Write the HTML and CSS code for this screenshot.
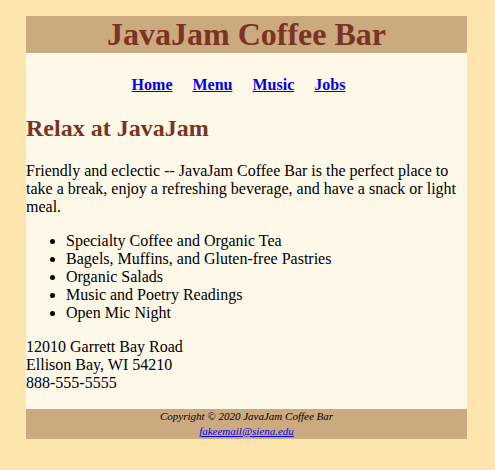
FILE: index.html
```html
<!DOCTYPE html>
<html lang="en">
<head>
<meta charset="utf-8">
<title>JavaJam Coffee Bar</title>
<link rel="stylesheet" href="styles.css">
</head>
<body>
<div class="wrapper">
  <header class="site-header">
    <h1>JavaJam Coffee Bar</h1>
  </header>
  <nav class="site-nav">
    <a href="#">Home</a>
    <a href="#">Menu</a>
    <a href="#">Music</a>
    <a href="#">Jobs</a>
  </nav>
  <main class="content">
    <h2>Relax at JavaJam</h2>
    <p>Friendly and eclectic -- JavaJam Coffee Bar is the perfect place to take a break, enjoy a refreshing beverage, and have a snack or light meal.</p>
    <ul>
      <li>Specialty Coffee and Organic Tea</li>
      <li>Bagels, Muffins, and Gluten-free Pastries</li>
      <li>Organic Salads</li>
      <li>Music and Poetry Readings</li>
      <li>Open Mic Night</li>
    </ul>
    <p class="address">12010 Garrett Bay Road<br>Ellison Bay, WI 54210<br>888-555-5555</p>
  </main>
  <footer class="site-footer">
    Copyright &copy; 2020 JavaJam Coffee Bar<br>
    <a href="#">fakeemail@siena.edu</a>
  </footer>
</div>
</body>
</html>
```

FILE: styles.css
```css
html, body {
  margin: 0;
  padding: 0;
}
body {
  background-color: #fce6ad;
  font-family: "Liberation Serif", "Times New Roman", serif;
  font-size: 16px;
  line-height: 18px;
  color: #000;
  padding: 16px 0 0;
}
.wrapper {
  width: 441px;
  margin: 0 0 0 26px;
  background-color: #fef8e9;
}
.site-header {
  background-color: #ccaa80;
}
.site-header h1 {
  margin: 0;
  color: #7b3423;
  font-size: 32px;
  line-height: 37px;
  text-align: center;
  font-weight: bold;
}
.site-nav {
  text-align: center;
  font-weight: bold;
  padding: 23px 0 0;
}
.site-nav a {
  color: #0000ee;
  margin-right: 16px;
}
.content h2 {
  color: #7b3423;
  font-size: 24px;
  line-height: 28px;
  margin: 20px 0;
}
.content p,
.content ul {
  margin: 0 0 16px;
}
.content ul {
  padding-left: 40px;
}
.content .address {
  margin-bottom: 17px;
}
.site-footer {
  background-color: #ccaa80;
  font-size: 11px;
  line-height: 15px;
  font-style: italic;
  text-align: center;
  padding: 0;
  height: 30px;
}
.site-footer a {
  color: #0000ee;
}
```
